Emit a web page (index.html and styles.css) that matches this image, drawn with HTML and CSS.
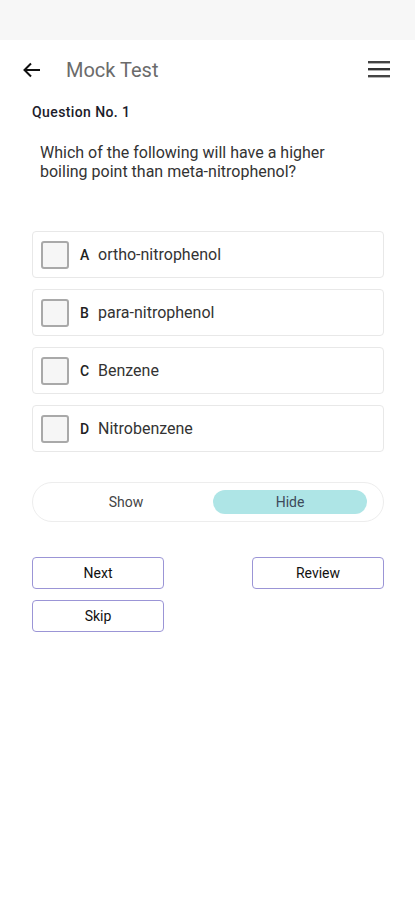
FILE: index.html
```html
<!DOCTYPE html>
<html>
<head>
<meta charset="utf-8">
<link rel="stylesheet" href="styles.css">
</head>
<body>
<div class="status"></div>
<header class="header">
  <svg class="back" width="18" height="16" viewBox="0 0 18 16"><path d="M17 8H2M8 1.5L1.5 8L8 14.5" fill="none" stroke="#111" stroke-width="2"/></svg>
  <span class="title">Mock Test</span>
  <svg class="menu" width="22" height="17" viewBox="0 0 22 17"><rect x="0" y="0" width="22" height="2.4" fill="#444"/><rect x="0" y="7" width="22" height="2.4" fill="#333"/><rect x="0" y="14" width="22" height="2.4" fill="#444"/></svg>
</header>
<main class="content">
  <div class="qno">Question No. 1</div>
  <p class="question">Which of the following will have a higher boiling point than meta-nitrophenol?</p>
  <div class="options">
    <div class="option"><span class="box"></span><span class="letter">A</span><span class="otext">ortho-nitrophenol</span></div>
    <div class="option"><span class="box"></span><span class="letter">B</span><span class="otext">para-nitrophenol</span></div>
    <div class="option"><span class="box"></span><span class="letter">C</span><span class="otext">Benzene</span></div>
    <div class="option"><span class="box"></span><span class="letter">D</span><span class="otext">Nitrobenzene</span></div>
  </div>
  <div class="toggle">
    <span class="seg">Show</span>
    <span class="seg active">Hide</span>
  </div>
  <div class="actions">
    <button class="btn">Next</button>
    <button class="btn">Review</button>
    <button class="btn">Skip</button>
  </div>
</main>
</body>
</html>
```
FILE: styles.css
```css
* { box-sizing: border-box; }
body {
  margin: 0;
  background: #fff;
  font-family: Roboto, "Noto Sans", sans-serif;
  color: #222;
}
.status {
  height: 40px;
  background: #f7f7f7;
}
.header {
  height: 60px;
  display: flex;
  align-items: center;
  padding: 0 25px 0 23px;
}
.back { flex: none; }
.title {
  margin-left: 25px;
  font-size: 20px;
  color: #6b6b6b;
  flex: 1;
}
.menu { flex: none; margin-top: -1px; }
.content {
  padding: 0 31px 0 32px;
}
.qno {
  margin-top: 3px;
  font-size: 14px;
  font-weight: 500;
  letter-spacing: 0.4px;
  color: #1c1c2a;
  line-height: 18px;
}
.question {
  margin: 22px 0 0 8px;
  font-size: 16px;
  line-height: 19px;
  color: #333;
  width: 310px;
}
.options {
  margin-top: 50px;
  display: flex;
  flex-direction: column;
  gap: 11px;
}
.option {
  height: 47px;
  border: 1px solid #e8e8e8;
  border-radius: 4px;
  display: flex;
  align-items: center;
  padding-left: 8px;
}
.box {
  width: 28px;
  height: 28px;
  border: 2px solid #a9a9a9;
  border-radius: 3px;
  background: #f6f6f6;
  flex: none;
}
.letter {
  margin-left: 11px;
  width: 18px;
  font-size: 14px;
  font-weight: 500;
  color: #222;
}
.otext {
  font-size: 16px;
  color: #333;
}
.toggle {
  margin-top: 30px;
  height: 40px;
  border: 1px solid #ededed;
  border-radius: 20px;
  display: flex;
  align-items: center;
  padding: 0 16px 0 6px;
}
.seg {
  flex: 1;
  height: 24px;
  display: flex;
  align-items: center;
  justify-content: center;
  font-size: 14px;
  color: #444;
  border-radius: 12px;
}
.seg.active {
  flex: none;
  width: 154px;
  background: #aee5e6;
  color: #3d4a5a;
}
.actions {
  margin-top: 35px;
  display: grid;
  grid-template-columns: 132px 132px;
  justify-content: space-between;
  row-gap: 11px;
}
.btn {
  height: 32px;
  background: #fff;
  border: 1.5px solid #9b95d6;
  border-radius: 4px;
  font-family: Roboto, "Noto Sans", sans-serif;
  font-size: 14px;
  font-weight: 400;
  color: #111;
  padding: 0;
}
```
